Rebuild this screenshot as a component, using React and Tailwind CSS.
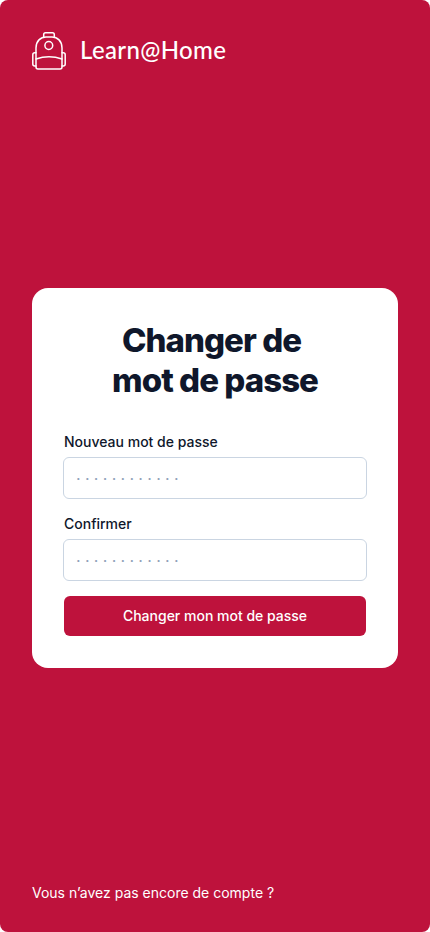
function BackpackIcon() {
  return (
    <svg width="34" height="38" viewBox="0 0 34 38" fill="none" stroke="white" strokeWidth="1.5" strokeLinejoin="round" strokeLinecap="round" aria-hidden="true">
      <path d="M11.7 5V2.6Q11.7.8 13.5.8h7Q22.3.8 22.3 2.6V5" />
      <path d="M4 35V16C4 9 8.6 5 14 5h6c5.400 0 10 4 10 11v19a2 2 0 0 1-2 2H6a2 2 0 0 1-2-2Z" />
      <circle cx="16.800" cy="13.500" r="3.900" />
      <path d="M4 27Q17 22.500 30 27" />
      <path d="M4 20.700H2.800a2 2 0 0 0-2 2v9.200a2 2 0 0 0 2 2H4M30 20.700h1.200a2 2 0 0 1 2 2v9.200a2 2 0 0 1-2 2H30" />
    </svg>
  );
}

function PasswordField({ id, label }) {
  return (
    <div>
      <label htmlFor={id} className="block text-sm leading-5 font-medium">{label}</label>
      <input
        id={id}
        type="text"
        placeholder="············"
        className="-mx-px mt-[5px] block h-[42px] w-[304px] rounded-md border border-slate-300 px-3 pt-0.5 text-base tracking-[4.300px] outline-none placeholder:text-slate-400"
      />
    </div>
  );
}

export default function App() {
  return (
    <div className="h-[932px] w-[430px] bg-white font-['Inter',sans-serif] text-slate-900">
      <main className="flex h-full flex-col rounded-lg bg-[#be123c] px-8 pt-8 pb-[29px]">
        <header className="flex h-[38px] items-center gap-[14px]">
          <BackpackIcon />
          <span className="-mt-0.5 font-['Lato',sans-serif] text-[24px] leading-9 font-medium tracking-[0.35px] text-white">Learn@Home</span>
        </header>
        <section className="mt-[218px] h-[380px] rounded-2xl bg-white p-8">
          <h1 className="text-center text-[33px] leading-10 font-extrabold tracking-[-0.95px]">
            <span className="block pr-[7px]">Changer de</span>
            <span className="block">mot de passe</span>
          </h1>
          <form className="mt-8 flex flex-col gap-[15px]">
            <PasswordField id="new-password" label="Nouveau mot de passe" />
            <PasswordField id="confirm-password" label="Confirmer" />
            <button type="button" className="h-10 w-full rounded-md bg-[#be123c] text-sm font-medium text-white">
              Changer mon mot de passe
            </button>
          </form>
        </section>
        <footer className="mt-auto text-sm leading-5 font-normal text-white">Vous n’avez pas encore de compte ?</footer>
      </main>
    </div>
  );
}
